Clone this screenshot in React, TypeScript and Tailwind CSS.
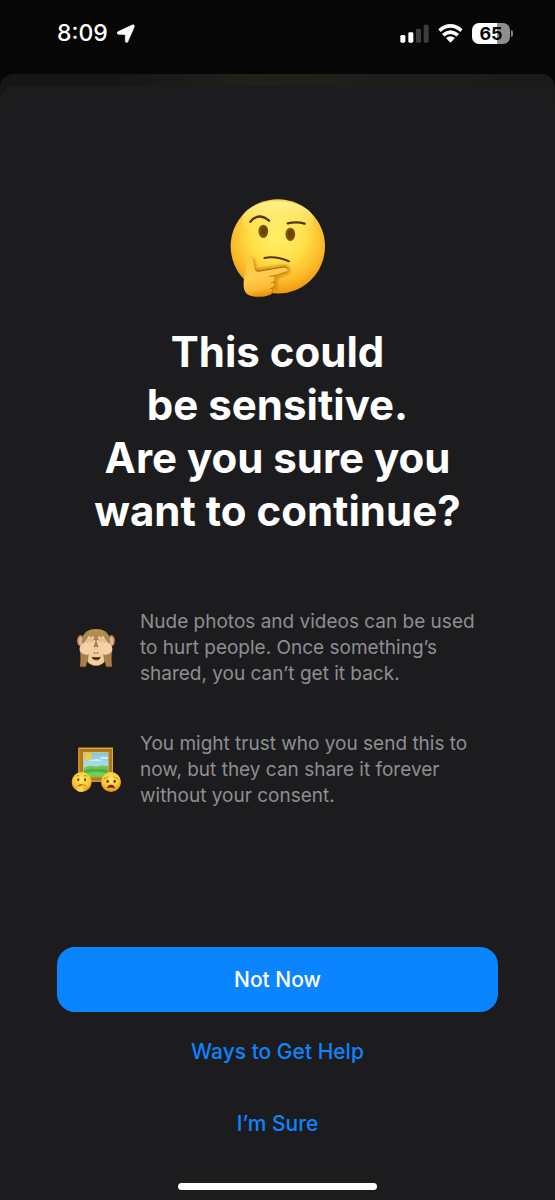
import React from "react";

function LocationArrow() {
  return (
    <svg viewBox="342 70 57 58" className="h-[19px] w-[19px]" aria-label="Location in use">
      <path
        d="M391 73 L347 94 Q342 98 348 101 L367 102 Q370 102 370 105 L370 123 Q372 129 377 125 L397 79 Q399 71 391 73Z"
        fill="#fff"
        stroke="#fff"
        strokeWidth="2"
        strokeLinejoin="round"
      />
    </svg>
  );
}

function Signal() {
  return (
    <svg viewBox="58 69 87 57" className="h-[19px] w-[29px]" aria-label="Signal strength">
      <rect x="59" y="102" width="15" height="23" rx="4" fill="#fff" />
      <rect x="83" y="94" width="15" height="31" rx="4" fill="#fff" />
      <rect x="106" y="83" width="15" height="42" rx="4" fill="#3c3c3c" />
      <rect x="129" y="71" width="15" height="54" rx="4" fill="#3c3c3c" />
    </svg>
  );
}

function Wifi() {
  return (
    <svg viewBox="173 68 75 58" className="h-[19px] w-[25px]" aria-label="Wi-Fi">
      <g fill="none" stroke="#fff" strokeWidth="11">
        <path d="M177 88 Q210 60 244 88" />
        <path d="M188 102 Q210 83 233 102" />
      </g>
      <path d="M197 111 Q210 100 224 111 L213 123 Q210 126 208 123Z" fill="#fff" />
    </svg>
  );
}

function Battery() {
  return (
    <div className="flex items-center gap-px" aria-label="Battery">
      <div className="flex h-[21px] w-[38px] items-center justify-center rounded-[7px] bg-linear-to-r from-white from-65% to-[#8e8e8e] to-65% text-[18px] leading-[21px] font-bold text-[#080808]">
        65
      </div>
      <div className="h-[7px] w-[2px] rounded-r-full bg-[#7c7c7c]" />
    </div>
  );
}

function ThinkingFace() {
  return (
    <svg viewBox="30 24 288 300" className="h-[100px] w-[96px]" role="img" aria-label="Thinking face">
      <defs>
        <radialGradient id="thinkFace" cx="0.5" cy="0.38" r="0.64">
          <stop offset="0" stopColor="#fff06a" />
          <stop offset="0.45" stopColor="#ffe04a" />
          <stop offset="0.78" stopColor="#fbb928" />
          <stop offset="1" stopColor="#ee920f" />
        </radialGradient>
        <linearGradient id="thinkShine" x1="0" y1="0" x2="0" y2="1">
          <stop offset="0" stopColor="#fff7a8" stopOpacity="0.8" />
          <stop offset="1" stopColor="#ffe552" stopOpacity="0" />
        </linearGradient>
        <linearGradient id="thinkHand" x1="0" y1="0" x2="0.2" y2="1">
          <stop offset="0" stopColor="#ffc93f" />
          <stop offset="0.55" stopColor="#ffcd4c" />
          <stop offset="0.85" stopColor="#fcb835" />
          <stop offset="1" stopColor="#e8940f" />
        </linearGradient>
        <filter id="thinkSoft" x="-20%" y="-20%" width="140%" height="140%">
          <feGaussianBlur stdDeviation="4" />
        </filter>
      </defs>
      <circle cx="173.500" cy="169" r="141.500" fill="url(#thinkFace)" />
      <ellipse cx="173" cy="90" rx="108" ry="56" fill="url(#thinkShine)" />
      <ellipse cx="130" cy="124" rx="14.500" ry="20" fill="#80510d" />
      <ellipse cx="131" cy="123" rx="8" ry="13" fill="#6b400a" />
      <ellipse cx="211" cy="133" rx="14.500" ry="20" fill="#80510d" />
      <ellipse cx="212" cy="132" rx="8" ry="13" fill="#6b400a" />
      <path d="M91 95 Q115 66 147 92" fill="none" stroke="#5a3207" strokeWidth="7" strokeLinecap="round" />
      <path d="M203 100 Q231 94 254 101" fill="none" stroke="#5a3207" strokeWidth="7" strokeLinecap="round" />
      <path d="M133 204 Q167 197 207 214" fill="none" stroke="#5a3207" strokeWidth="6" strokeLinecap="round" />
      <path
        d="M98 206 L104 236 Q108 242 120 239 L190 229 Q209 231 205 246 L167 262 L166 300"
        fill="none"
        stroke="#bd6d05"
        strokeOpacity="0.7"
        strokeWidth="9"
        filter="url(#thinkSoft)"
      />
      <path
        d="M80 203 C87 197 99 203 100 215 L104 237 Q108 246 120 243 L190 231 C204 229 208 243 195 247 L164 257 C170 263 167 271 164 276 C169 283 165 291 160 294 C162 303 157 311 149 315 C127 323 94 323 80 311 C69 300 70 284 72 265 C74 246 82 240 79 220 Q77 208 80 203Z"
        fill="url(#thinkHand)"
      />
      <path d="M106 240 Q110 246 120 243 L190 231 Q199 230 202 235" fill="none" stroke="#a65f08" strokeWidth="3" strokeLinecap="round" />
      <path
        d="M197 246 L164 257 L148 259 M164 257 Q169 268 163 276 L154 278 M163 276 Q168 287 159 294 L151 296 M159 294 Q161 306 152 313"
        fill="none"
        stroke="#c9770b"
        strokeWidth="3"
        strokeLinecap="round"
      />
    </svg>
  );
}

function CoveredMonkey() {
  return (
    <svg viewBox="33 38 150 126" className="h-[42px] w-[50px] shrink-0" role="img" aria-label="Monkey covering its eyes">
      <defs>
        <linearGradient id="monkeyFur" x1="0" y1="0" x2="0" y2="1">
          <stop offset="0" stopColor="#b98f52" />
          <stop offset="1" stopColor="#96703d" />
        </linearGradient>
        <linearGradient id="monkeyHand" x1="0" y1="0" x2="0" y2="1">
          <stop offset="0" stopColor="#f0d2a8" />
          <stop offset="1" stopColor="#f3d0a4" />
        </linearGradient>
      </defs>
      <ellipse cx="62" cy="79" rx="11" ry="17" fill="#b08450" />
      <ellipse cx="154" cy="79" rx="11" ry="17" fill="#b08450" />
      <ellipse cx="62" cy="80" rx="6" ry="12" fill="#eab3a0" />
      <ellipse cx="154" cy="80" rx="6" ry="12" fill="#eab3a0" />
      <path d="M108 44 C138 44 151 61 151 88 C151 118 139 154 108 155 C77 154 65 118 65 88 C65 61 78 44 108 44Z" fill="url(#monkeyFur)" />
      <path d="M108 98 C125 98 136 112 136 128 C136 144 124 153 108 153 C92 153 80 144 80 128 C80 112 91 98 108 98Z" fill="#f0cda3" />
      <path d="M60 108 L86 116 Q84 140 77 157 H60 Q63 130 60 108Z" fill="#aa8049" stroke="#76522a" strokeWidth="1" />
      <path d="M156 108 L130 116 Q132 140 139 157 H156 Q153 130 156 108Z" fill="#aa8049" stroke="#76522a" strokeWidth="1" />
      <g id="monkeyPalm">
        <path d="M59 108 C57 93 67 88 75 83 L86 66 Q91 63 92 69 L87 80 L97 66 Q103 64 102 71 L96 83 L102 77 Q108 76 105 84 L99 103 C94 116 85 122 77 121 Q64 119 59 108Z" fill="url(#monkeyHand)" />
        <path d="M81 84 L86 76 M90 85 L96 76" stroke="#c08f60" strokeWidth="2" strokeLinecap="round" />
      </g>
      <use href="#monkeyPalm" transform="translate(216 0) scale(-1 1)" />
      <path d="M103 115 L105 118 M113 115 L111 118" stroke="#735036" strokeWidth="3" strokeLinecap="round" />
      <path d="M95 127 Q108 130 122 127 Q119 138 108 138 Q98 137 95 127Z" fill="#45190e" />
      <path d="M103 135 Q108 132 114 135 Q108 138 103 135Z" fill="#a85243" />
    </svg>
  );
}

function FramedPicture() {
  return (
    <svg viewBox="33 36 150 144" className="h-[48px] w-[50px] shrink-0" role="img" aria-label="Framed picture with two worried faces">
      <defs>
        <linearGradient id="pictureSky" x1="0" y1="0" x2="0" y2="1">
          <stop offset="0" stopColor="#7cc8e6" />
          <stop offset="1" stopColor="#d4eeee" />
        </linearGradient>
        <radialGradient id="smallFace" cx="0.5" cy="0.35" r="0.66">
          <stop offset="0" stopColor="#ffec67" />
          <stop offset="0.6" stopColor="#fcc938" />
          <stop offset="1" stopColor="#ed8b13" />
        </radialGradient>
        <clipPath id="pictureView">
          <rect x="71" y="56" width="73" height="72" />
        </clipPath>
      </defs>
      <rect x="55" y="41" width="104" height="103" fill="#986113" />
      <rect x="57" y="43" width="100" height="98" fill="none" stroke="#e3a92d" strokeWidth="4" />
      <rect x="64" y="50" width="86" height="84" fill="none" stroke="#b37a1b" strokeWidth="9" />
      <rect x="69" y="54" width="77" height="76" fill="#dcc069" />
      <g clipPath="url(#pictureView)">
        <rect x="71" y="56" width="73" height="72" fill="url(#pictureSky)" />
        <circle cx="84" cy="68" r="11" fill="#f0cc3c" />
        <path d="M86 82 Q92 75 99 79 Q108 71 116 77 Q124 76 126 82Z M121 72 Q128 65 134 69 Q140 67 145 72 V75 H121Z" fill="#d6e9ee" />
        <path d="M71 102 Q88 91 109 98 Q126 91 145 97 V129 H71Z" fill="#72c552" />
        <path d="M71 110 Q91 101 110 106 Q127 102 145 109 V129 H71Z" fill="#4fae45" />
        <path d="M71 118 Q107 108 145 118 V129 H71Z" fill="#73cf4e" />
      </g>
      <circle cx="65" cy="144" r="30" fill="url(#smallFace)" />
      <ellipse cx="55" cy="137" rx="3" ry="5" fill="#704309" />
      <ellipse cx="75" cy="137" rx="3" ry="5" fill="#704309" />
      <path d="M48 127 Q52 123 58 126 M71 126 Q77 123 82 127" fill="none" stroke="#a56a14" strokeWidth="2" />
      <path d="M54 155 Q64 149 76 154" fill="none" stroke="#78430d" strokeWidth="3" />
      <path d="M50 168 L50 159 Q51 152 56 155 L58 161 L70 150 Q75 148 75 152 L68 159 L77 156 Q81 157 77 161 L69 165 L76 164 Q80 167 73 170 Q66 176 57 173Z" fill="#ffd24a" stroke="#bd7a1a" strokeWidth="1" />
      <circle cx="153" cy="144" r="30" fill="url(#smallFace)" />
      <ellipse cx="143" cy="142" rx="4" ry="5" fill="#704309" />
      <ellipse cx="164" cy="142" rx="4" ry="5" fill="#704309" />
      <path d="M133 134 Q140 133 145 128 M161 128 Q166 133 173 134" fill="none" stroke="#a0640f" strokeWidth="2" strokeLinecap="round" />
      <path d="M142 162 Q144 153 153 153 Q162 153 164 162 Q153 158 142 162Z" fill="#75250e" stroke="#75250e" strokeWidth="2" strokeLinejoin="round" />
    </svg>
  );
}

function Reason({ icon, children }: { icon: React.ReactNode; children: React.ReactNode }) {
  return (
    <li className="flex items-center gap-[19px]">
      {icon}
      <p>{children}</p>
    </li>
  );
}

export default function App() {
  return (
    <div className="flex min-h-screen flex-col bg-[#060606] font-['Inter','Liberation_Sans',sans-serif] text-white">
      <header className="flex h-[74px] items-center justify-between pr-[42px] pb-2 pl-[57px]">
        <div className="flex items-center gap-2">
          <time className="text-[23px] leading-6 font-medium">8:09</time>
          <LocationArrow />
        </div>
        <div className="flex items-center gap-[9px]">
          <Signal />
          <Wifi />
          <Battery />
        </div>
      </header>

      <div className="flex grow flex-col rounded-t-[14px] bg-linear-to-r from-[#161616] from-20% via-[#23201b] via-45% to-[#1b1a18] pt-3">
        <main className="flex grow flex-col rounded-t-[14px] bg-[#1c1c1e] px-[57px] pt-28 pb-[10px]">
          <div className="flex justify-center">
            <ThinkingFace />
          </div>
          <h1 className="mt-[27px] text-center text-[42px] leading-[53px] font-bold">
            This could
            <br />
            be sensitive.
            <br />
            Are you sure you
            <br />
            want to continue?
          </h1>

          <ul className="mt-[72px] flex flex-col gap-11 pl-[14px] text-[19px] leading-[26px] text-[#8e8e93]">
            <Reason icon={<CoveredMonkey />}>
              Nude photos and videos can be used
              <br />
              to hurt people. Once something’s
              <br />
              shared, you can’t get it back.
            </Reason>
            <Reason icon={<FramedPicture />}>
              You might trust who you send this to
              <br />
              now, but they can share it forever
              <br />
              without your consent.
            </Reason>
          </ul>

          <div className="mt-auto flex flex-col text-[21px] font-medium">
            <button type="button" className="mb-1 h-[65px] rounded-[18px] bg-[#0a84ff] text-white">
              Not Now
            </button>
            <button type="button" className="h-[72px] text-[#0a84ff]">
              Ways to Get Help
            </button>
            <button type="button" className="h-[72px] text-[#0a84ff]">
              I’m Sure
            </button>
          </div>
          <div className="mx-auto mt-[23px] h-[7px] w-[199px] rounded-full bg-white" />
        </main>
      </div>
    </div>
  );
}
